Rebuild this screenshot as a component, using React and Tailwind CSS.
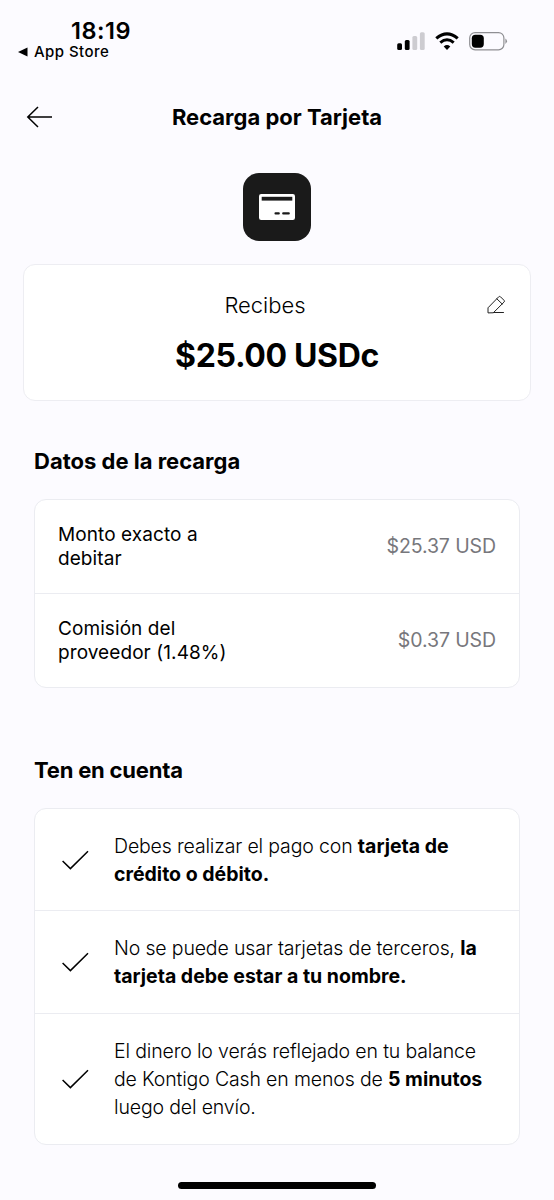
const details = [
    { label: ['Monto exacto a', 'debitar'], value: '$25.37 USD' },
    { label: ['Comisión del', 'proveedor (1.48%)'], value: '$0.37 USD' },
];

function StatusBar() {
    return (
        <div className="h-[75px] flex justify-between">
            <div className="w-[150px] pt-[17px]">
                <div className="pl-[71px] text-[23.5px] leading-[27px] font-semibold tracking-[0.5px] whitespace-nowrap">18:19</div>
                <div className="pl-[18px] flex items-center gap-[6px] text-[15px] leading-4 font-medium tracking-[0.45px] whitespace-nowrap">
                    <svg width="10" height="10" viewBox="0 0 10 10" fill="currentColor">
                        <path d="M0 5 L9.5 0.5 V9.5 Z" />
                    </svg>
                    <span>App Store</span>
                </div>
            </div>
            <div className="flex items-start pt-[31px] pr-[46px]">
                <svg width="28" height="19" viewBox="0 0 28 19">
                    <rect x="0.2" y="12.2" width="4.8" height="6.8" rx="1.5" />
                    <rect x="7.8" y="9" width="4.8" height="10" rx="1.5" />
                    <rect x="15.4" y="5" width="4.8" height="14" rx="1.5" fill="#cdccd1" />
                    <rect x="22.9" y="1.3" width="4.8" height="17.7" rx="1.5" fill="#cdccd1" />
                </svg>
                <svg className="ml-[10px]" width="24" height="19" viewBox="0 0 24 19">
                    <path d="M1.3 7.4 Q12 -1.6 22.7 7.4" fill="none" stroke="currentColor" strokeWidth="3.2" />
                    <path d="M5.3 11.6 Q12 6 18.7 11.6" fill="none" stroke="currentColor" strokeWidth="3" />
                    <path d="M8.7 15.4 Q12 12.5 15.3 15.4 L12 18.9 Z" />
                </svg>
                <svg className="ml-[10px]" width="39" height="20" viewBox="0 0 39 20">
                    <rect x="0.7" y="1.6" width="34.2" height="17.2" rx="5.4" fill="none" stroke="#8f8f93" strokeWidth="1.2" />
                    <rect x="2.8" y="3.7" width="12" height="13" rx="3.6" />
                    <path d="M36.4 7.5 Q39.6 10.2 36.4 12.9 Z" fill="#8f8f93" />
                </svg>
            </div>
        </div>
    );
}

function CardIcon() {
    return (
        <div className="w-[68px] h-[68px] rounded-2xl bg-[#1a1a1a] flex items-center justify-center">
            <svg width="36" height="26" viewBox="0 0 36 26">
                <rect x="0" y="0" width="36" height="26" rx="2.2" fill="#fff" />
                <rect x="2.7" y="2.8" width="30.6" height="3.8" fill="#1a1a1a" />
                <path d="M16.5 19.4 H19.8 M24.2 19.4 H29.8" stroke="#1a1a1a" strokeWidth="2.1" strokeLinecap="round" />
            </svg>
        </div>
    );
}

function EditIcon() {
    return (
        <svg width="20" height="20" viewBox="0 0 20 20" fill="none" stroke="#222" strokeWidth="1" strokeLinejoin="round" strokeLinecap="round">
            <path d="M2 17.5 V12.8 L12.7 1.8 Q13.6 1 14.5 1.8 L18.1 5.4 Q18.8 6.2 18.1 7 L7.6 17.5 Z" />
            <path d="M10.8 3.8 L16.2 9 M7.6 17.5 H17.5" />
        </svg>
    );
}

function Check() {
    return (
        <svg className="shrink-0" width="28" height="20" viewBox="0 0 28 20" fill="none" stroke="currentColor" strokeWidth="1.5">
            <path d="M0.6 11 L8.4 18.6 L26 1.2" />
        </svg>
    );
}

function Strong({ children }) {
    return <b className="font-bold tracking-[0px]">{children}</b>;
}

function Note({ children, className = '' }) {
    return (
        <div className={`flex items-center pl-[27px] ${className}`}>
            <Check />
            <p className="ml-6 text-[19.5px] leading-7 font-[350] tracking-[-0.15px] whitespace-nowrap">{children}</p>
        </div>
    );
}

export default function App() {
    return (
        <div className="w-[554px] h-[1200px] bg-[#fcfbff] text-black font-['Inter',sans-serif] flex flex-col overflow-hidden">
            <StatusBar />

            <header className="h-[84px] flex items-center px-[26px]">
                <svg width="27" height="22" viewBox="0 0 27 22" fill="none" stroke="currentColor" strokeWidth="1.5">
                    <path d="M26 11 H1.5 M12 1 L1.8 11 L12 21" />
                </svg>
                <h1 className="flex-1 pr-[27px] text-center text-[22px] leading-7 font-bold">Recarga por Tarjeta</h1>
            </header>

            <div className="pt-[14px] flex justify-center">
                <CardIcon />
            </div>

            <section className="mx-[23px] mt-[23px] h-[137px] bg-white border border-[#ededf2] rounded-xl pt-[26px] text-center">
                <div className="grid grid-cols-[1fr_auto_1fr] items-center">
                    <span className="col-start-2 -ml-6 text-[22px] leading-7 font-[350]">Recibes</span>
                    <span className="justify-self-end pr-6">
                        <EditIcon />
                    </span>
                </div>
                <div className="mt-[17px] text-[32px] leading-10 font-bold tracking-[-0.35px]">$25.00 USDc</div>
            </section>

            <h2 className="ml-[34px] mt-[46px] text-[22px] leading-7 font-bold">Datos de la recarga</h2>
            <section className="mx-[34px] mt-6 h-[189px] bg-white border border-[#ebecf1] rounded-xl divide-y divide-[#ebecf1] flex flex-col">
                {details.map((item) => (
                    <div key={item.value} className="flex-1 flex items-center justify-between px-[23px]">
                        <div className="pt-px text-[19px] leading-6 tracking-[0.08px]">
                            {item.label.map((line) => (
                                <div key={line}>{line}</div>
                            ))}
                        </div>
                        <span className="pt-px text-[19.5px] tracking-[-0.1px] text-[#77777c]">{item.value}</span>
                    </div>
                ))}
            </section>

            <h2 className="ml-[34px] mt-[68px] text-[22px] leading-7 font-bold tracking-[-0.2px]">Ten en cuenta</h2>
            <section className="mx-[34px] mt-6 bg-white border border-[#ebecf1] rounded-xl divide-y divide-[#ebecf1]">
                <Note className="h-[102px]">
                    Debes realizar el pago con <Strong>tarjeta de</Strong>
                    <br />
                    <Strong>crédito o débito.</Strong>
                </Note>
                <Note className="h-[103px]">
                    No se puede usar tarjetas de terceros, <Strong>la</Strong>
                    <br />
                    <Strong>tarjeta debe estar a tu nombre.</Strong>
                </Note>
                <Note className="h-[130px]">
                    El dinero lo verás reflejado en tu balance
                    <br />
                    de Kontigo Cash en menos de <Strong>5 minutos</Strong>
                    <br />
                    luego del envío.
                </Note>
            </section>

            <div className="mt-auto mb-[11px] mx-auto w-[198px] h-[7px] rounded-full bg-black" />
        </div>
    );
}
